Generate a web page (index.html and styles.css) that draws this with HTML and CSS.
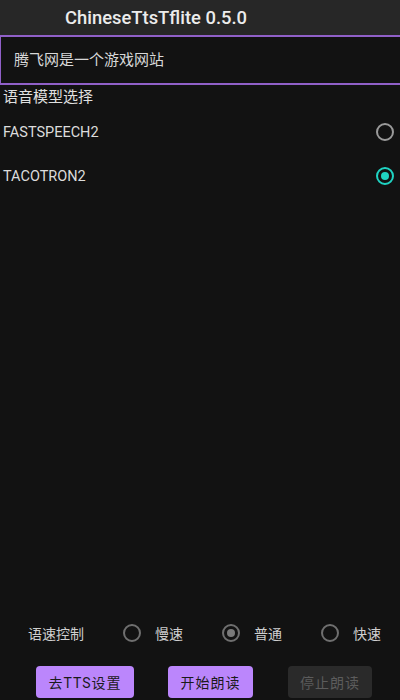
FILE: index.html
```html
<!DOCTYPE html>
<html>
<head>
  <title>ChineseTtsTflite</title>
  <link rel="stylesheet" href="styles.css">
</head>
<body>

  <div class="app">
    <div class="title-bar">ChineseTtsTflite 0.5.0</div>

    <div class="text-input">腾飞网是一个游戏网站</div>

    <div class="section-label">语音模型选择</div>

    <div class="model-row">
      <span>FASTSPEECH2</span>
      <span class="radio"></span>
    </div>
    <div class="model-row">
      <span>TACOTRON2</span>
      <span class="radio checked"></span>
    </div>

    <div class="bottom">
      <div class="speed-row">
        <span class="speed-label">语速控制</span>
        <label class="speed-option"><span class="radio small"></span>慢速</label>
        <label class="speed-option"><span class="radio small gray-checked"></span>普通</label>
        <label class="speed-option"><span class="radio small"></span>快速</label>
      </div>

      <div class="button-row">
        <button class="btn btn-settings">去TTS设置</button>
        <button class="btn btn-start">开始朗读</button>
        <button class="btn btn-stop" disabled>停止朗读</button>
      </div>
    </div>
  </div>

</body>
</html>
```

FILE: styles.css
```css
body {
  margin: 0;
  background-color: #121212;
  font-family: Roboto, "Noto Sans CJK SC", sans-serif;
  color: #e2e2e2;
}

.app {
  height: 700px;
  display: flex;
  flex-direction: column;
}

.title-bar {
  height: 35px;
  line-height: 35px;
  padding-left: 65px;
  background-color: #272727;
  color: #ececec;
  font-size: 18.4px;
  font-weight: 500;
}

.text-input {
  height: 46px;
  line-height: 46px;
  padding-left: 13px;
  border-top: 2px solid #9060c8;
  border-bottom: 2px solid #9060c8;
  border-left: 1px solid #9060c8;
  font-size: 15px;
  color: #d8d8d8;
}

.section-label {
  height: 25px;
  line-height: 25px;
  padding-left: 3px;
  font-size: 15px;
  color: #e0e0e0;
}

.model-row {
  height: 44px;
  display: flex;
  align-items: center;
  justify-content: space-between;
  padding: 0 6px 0 3px;
  font-size: 14.5px;
  color: #dcdcdc;
}

.radio {
  width: 14px;
  height: 14px;
  border: 2px solid #9a9a9a;
  border-radius: 50%;
  display: inline-block;
  position: relative;
  box-sizing: content-box;
}

.radio.checked {
  border-color: #1fd3c2;
}

.radio.checked::after {
  content: "";
  position: absolute;
  left: 3px;
  top: 3px;
  width: 8px;
  height: 8px;
  border-radius: 50%;
  background-color: #1fd3c2;
}

.radio.small {
  border-color: #6f6f6f;
}

.radio.gray-checked::after {
  content: "";
  position: absolute;
  left: 3px;
  top: 3px;
  width: 8px;
  height: 8px;
  border-radius: 50%;
  background-color: #7a7a7a;
}

.bottom {
  margin-top: auto;
  padding-bottom: 2px;
}

.speed-row {
  display: flex;
  align-items: center;
  gap: 39px;
  padding-left: 28px;
  height: 28px;
  font-size: 14px;
  color: #cfcfcf;
}

.speed-option {
  display: flex;
  align-items: center;
  gap: 14px;
}

.button-row {
  display: flex;
  gap: 34px;
  padding-left: 36px;
  margin-top: 19px;
}

.btn {
  height: 32px;
  border: none;
  border-radius: 4px;
  font-family: Roboto, "Noto Sans CJK SC", sans-serif;
  font-size: 14px;
  font-weight: 400;
  letter-spacing: 1px;
  padding: 0;
  cursor: pointer;
}

.btn-settings {
  width: 98px;
  background-color: #bb86fc;
  color: #1b1b1b;
}

.btn-start {
  width: 85px;
  background-color: #bb86fc;
  color: #1b1b1b;
}

.btn-stop {
  width: 84px;
  margin-left: 1px;
  background-color: #2a2a2a;
  color: #5c5c5c;
}
```
